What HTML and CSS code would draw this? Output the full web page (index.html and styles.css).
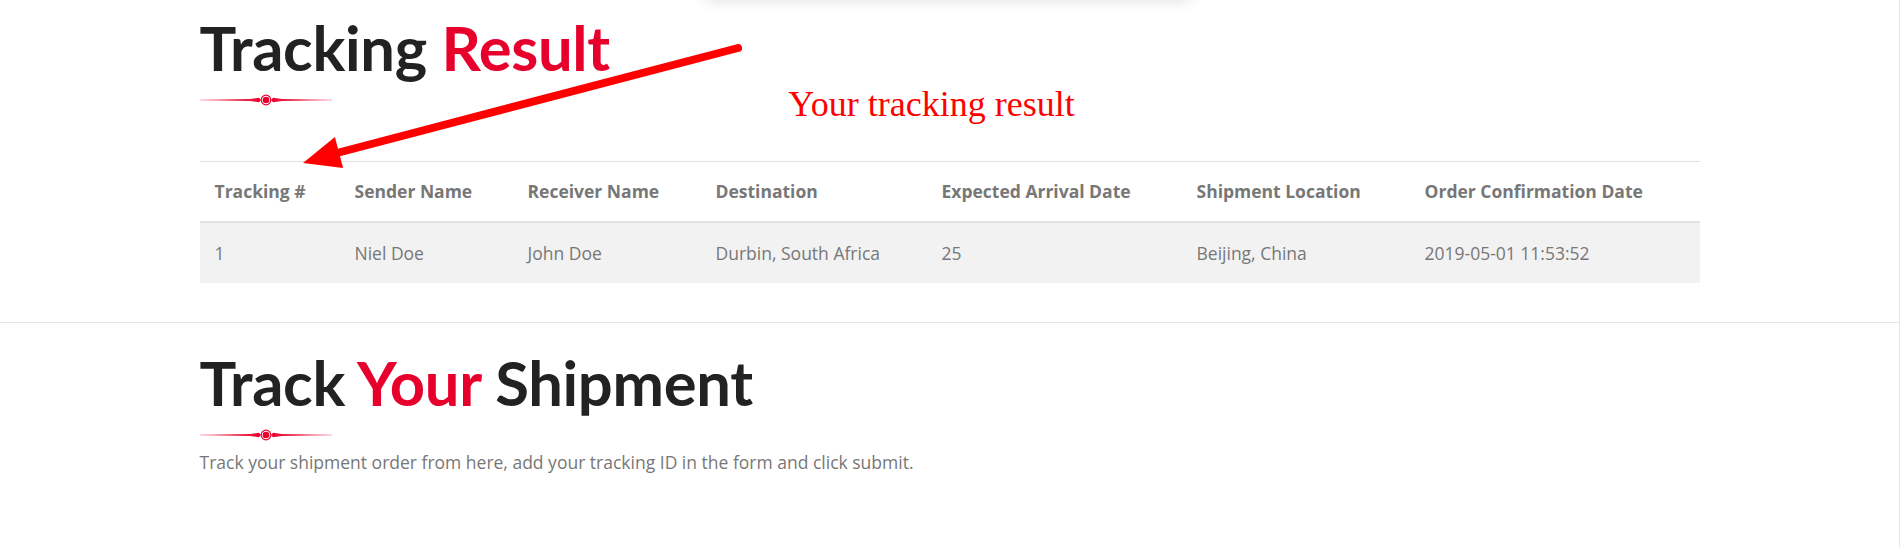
FILE: index.html
```html
<!DOCTYPE html>
<html lang="en">
<head>
<meta charset="utf-8">
<title>Tracking Result</title>
<link rel="stylesheet" href="styles.css">
</head>
<body>
<div class="page">
  <div class="top-popup"></div>

  <section class="result-section">
    <div class="container">
      <h2 class="section-title">Tracking <span class="accent">Result</span></h2>
      <svg class="divider" width="132" height="12" viewBox="0 0 132 12" aria-hidden="true">
        <defs>
          <linearGradient id="fadeL" x1="0" y1="0" x2="1" y2="0">
            <stop offset="0" stop-color="#e8002c" stop-opacity="0.3"/>
            <stop offset="0.6" stop-color="#e8002c" stop-opacity="0.8"/>
            <stop offset="1" stop-color="#e8002c" stop-opacity="1"/>
          </linearGradient>
          <linearGradient id="fadeR" x1="0" y1="0" x2="1" y2="0">
            <stop offset="0" stop-color="#e8002c" stop-opacity="1"/>
            <stop offset="0.4" stop-color="#e8002c" stop-opacity="0.8"/>
            <stop offset="1" stop-color="#e8002c" stop-opacity="0.3"/>
          </linearGradient>
        </defs>
        <polygon points="0,5.5 50,5 59,3.8 61,6 59,8.2 50,7 0,6.5" fill="url(#fadeL)"/>
        <polygon points="73,3.8 82,5 132,5.5 132,6.5 82,7 73,8.2 71,6" fill="url(#fadeR)"/>
        <circle cx="66" cy="6" r="5.4" fill="#e8002c"/>
        <circle cx="66" cy="6" r="4.2" fill="#fff"/>
        <circle cx="66" cy="6" r="3.3" fill="#e8002c"/>
      </svg>
      <p class="note">Your tracking result</p>

      <table class="tracking-table">
        <colgroup>
          <col style="width:140px">
          <col style="width:173px">
          <col style="width:188px">
          <col style="width:226px">
          <col style="width:255px">
          <col style="width:228px">
          <col style="width:290px">
        </colgroup>
        <thead>
          <tr>
            <th>Tracking #</th>
            <th>Sender Name</th>
            <th>Receiver Name</th>
            <th>Destination</th>
            <th>Expected Arrival Date</th>
            <th>Shipment Location</th>
            <th>Order Confirmation Date</th>
          </tr>
        </thead>
        <tbody>
          <tr>
            <td>1</td>
            <td>Niel Doe</td>
            <td>John Doe</td>
            <td>Durbin, South Africa</td>
            <td>25</td>
            <td>Beijing, China</td>
            <td>2019-05-01 11:53:52</td>
          </tr>
        </tbody>
      </table>
    </div>

    <svg class="pointer-arrow" width="460" height="140" viewBox="0 0 460 140" aria-hidden="true">
      <line x1="448" y1="13" x2="47" y2="118" stroke="#ff0000" stroke-width="8" stroke-linecap="round"/>
      <polygon points="13,128 44.9,102 53.1,133" fill="#ff0000"/>
    </svg>
  </section>

  <section class="track-section">
    <div class="container">
      <h2 class="section-title">Track <span class="accent">Your</span> Shipment</h2>
      <svg class="divider" width="132" height="12" viewBox="0 0 132 12" aria-hidden="true">
        <polygon points="0,5.5 50,5 59,3.8 61,6 59,8.2 50,7 0,6.5" fill="url(#fadeL)"/>
        <polygon points="73,3.8 82,5 132,5.5 132,6.5 82,7 73,8.2 71,6" fill="url(#fadeR)"/>
        <circle cx="66" cy="6" r="5.4" fill="#e8002c"/>
        <circle cx="66" cy="6" r="4.2" fill="#fff"/>
        <circle cx="66" cy="6" r="3.3" fill="#e8002c"/>
      </svg>
      <p class="lead">Track your shipment order from here, add your tracking ID in the form and click submit.</p>
    </div>
  </section>
</div>
</body>
</html>
```

FILE: styles.css
```css
* {
  box-sizing: border-box;
}

html, body {
  margin: 0;
  padding: 0;
  background: #ffffff;
}

body {
  font-family: "Open Sans", "Liberation Sans", sans-serif;
  color: #777777;
  font-size: 17.5px;
  height: 548px;
  overflow: hidden;
}

.page {
  position: relative;
  min-height: 548px;
  border-right: 1px solid #e6e6e6;
}

.top-popup {
  position: absolute;
  left: 703px;
  top: -40px;
  width: 490px;
  height: 40px;
  background: #ffffff;
  border-radius: 0 0 12px 12px;
  box-shadow: 0 2px 14px rgba(0, 0, 0, 0.11);
}

.container {
  width: 1500px;
  margin: 0 auto;
}

.result-section {
  position: relative;
  padding-top: 10px;
  padding-bottom: 39px;
  border-bottom: 1px solid #e5e5e5;
}

.section-title {
  margin: 0;
  font-family: "Lato", "Liberation Sans", sans-serif;
  font-weight: 700;
  font-size: 61.5px;
  line-height: 74px;
  color: #222222;
  letter-spacing: -0.3px;
}

.accent {
  color: #e8002c;
}

.divider {
  display: block;
  margin-top: 10px;
}

.note {
  margin: -22px 0 0 0;
  padding-right: 36px;
  text-align: center;
  font-family: "Liberation Serif", "Times New Roman", serif;
  font-size: 36px;
  line-height: 1.15;
  color: #ff0000;
}

.tracking-table {
  width: 1500px;
  margin-top: 36px;
  border-collapse: collapse;
  table-layout: fixed;
}

.tracking-table th,
.tracking-table td {
  text-align: left;
  padding: 18.5px 15px;
  line-height: 23px;
  font-size: 17.5px;
  white-space: nowrap;
}

.tracking-table th {
  padding-top: 18px;
  padding-bottom: 18px;
  font-weight: 700;
  color: #777777;
  border-top: 1px solid #dee2e6;
  border-bottom: 2px solid #dee2e6;
}

.tracking-table td {
  color: #777777;
  background: #f2f2f2;
}

.pointer-arrow {
  position: absolute;
  left: 290px;
  top: 35px;
}

.track-section {
  padding-top: 22px;
}

.lead {
  margin: 9px 0 0 0;
  font-size: 17.5px;
  line-height: 24px;
  color: #777777;
}
```
